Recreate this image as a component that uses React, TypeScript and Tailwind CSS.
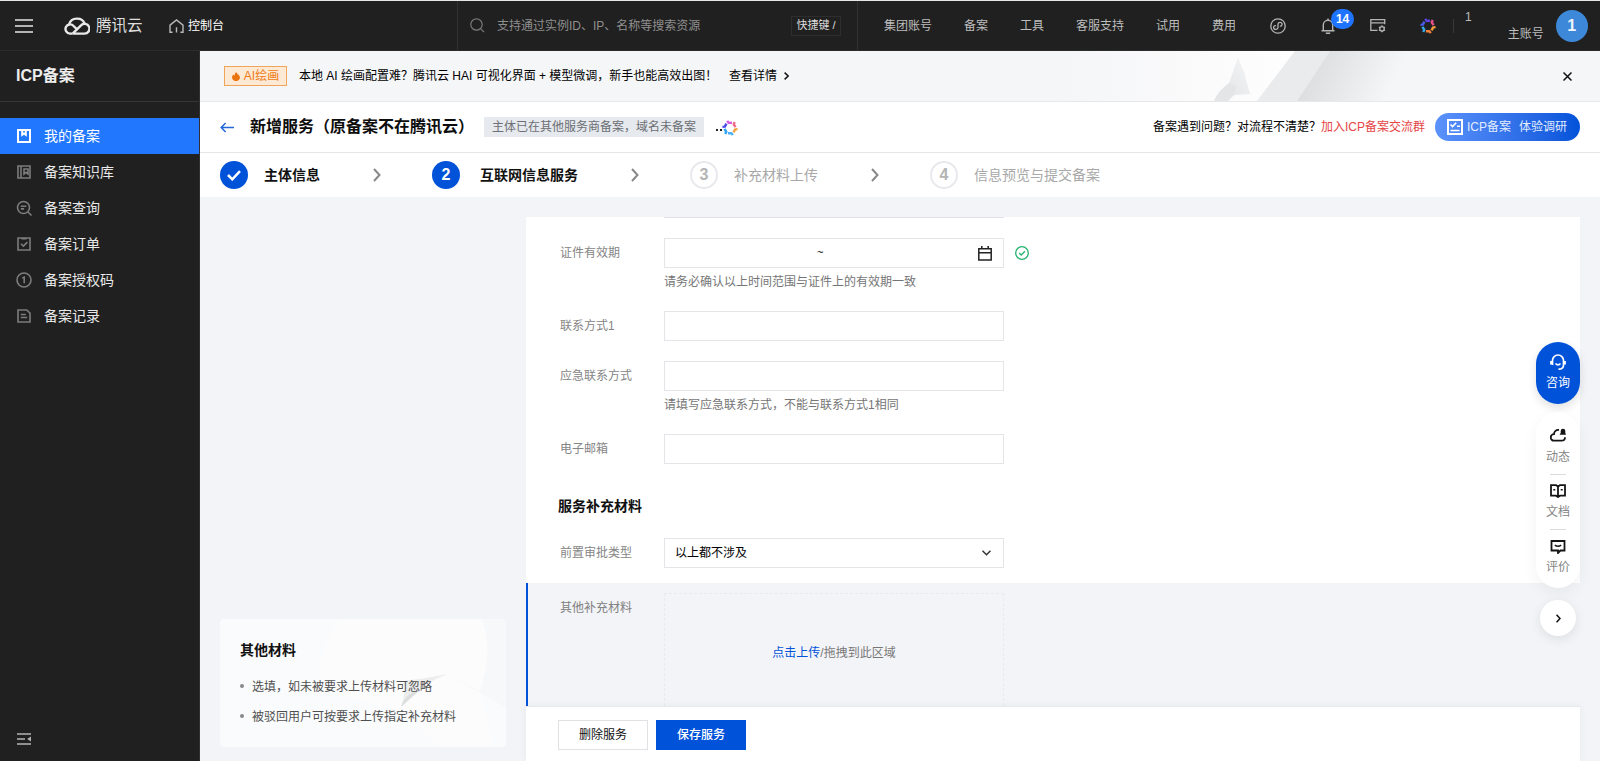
import React from "react";

const FONT = "font-['Liberation_Sans','Noto_Sans_CJK_SC',sans-serif]";

const PETALS = [0, 60, 120, 180, 240, 300];

function Flower({ className, colors }: { className: string; colors: string[] }) {
  return (
    <svg viewBox="0 0 16 16" className={className} fill="none" strokeWidth="2.4" strokeLinejoin="round">
      {PETALS.map((angle, i) => (
        <path key={angle} d="M5.2 0.900 L6.600 2.900 L10 2.700" stroke={colors[i]} transform={`rotate(${angle} 8 8)`} />
      ))}
    </svg>
  );
}

function Header() {
  return (
    <header className="flex h-[51px] w-full shrink-0 items-center border-t border-b border-t-[#e4e8e6] border-b-[#2c2c2c] bg-[#202020] text-xs text-[#bdbdbd]">
      <svg className="ml-[15px] h-[14px] w-[18px]" viewBox="0 0 18 14" stroke="#b4b4b4" strokeWidth="2">
        <path d="M0 1h18M0 7h18M0 13h18" />
      </svg>
      <svg className="ml-[31px] h-[19px] w-[26px]" viewBox="0 0 26 19" fill="none" stroke="#e8e8e8" strokeWidth="2.4">
        <path d="M5.2 8.2A8 7.2 0 0 1 20.6 7.6" />
        <path d="M8.6 17.6H6a4.6 4.6 0 1 1 3.6-7.6l4 3.8" />
        <path d="M8.6 17.6H20.4a4.9 4.9 0 1 0-3.4-8.3L8.6 17.6" />
      </svg>
      <span className="ml-[6px] w-[48px] text-[15.5px] leading-5 text-[#dedede]">腾讯云</span>
      <svg className="ml-[25px] h-[14px] w-[15px]" viewBox="0 0 15 14" fill="none" stroke="#b8b8b8" strokeWidth="1.4">
        <path d="M3.6 13.2H1V6.2L7.5 1 14 6.2v7H11.4M7.5 8.2V13.6" />
      </svg>
      <span className="ml-1 w-9 whitespace-nowrap text-white">控制台</span>
      <div className="ml-[233px] flex h-full w-[401px] items-center border-x border-[#303030]">
        <svg className="ml-[12px] h-[15px] w-[15px]" viewBox="0 0 15 15" fill="none" stroke="#777" strokeWidth="1.2">
          <circle cx="6.5" cy="6.5" r="5.7" />
          <path d="M10.8 10.8L14 14" />
        </svg>
        <span className="ml-3 text-[#8f8f8f]">支持通过实例ID、IP、名称等搜索资源</span>
        <span className="mr-[16px] ml-auto flex h-5 w-[50px] items-center justify-center border border-[#2e2e2e] text-[11px] whitespace-nowrap text-[#dcdcdc]">
          快捷键 /
        </span>
      </div>
      <nav className="ml-[26px] flex gap-8 whitespace-nowrap">
        <span>集团账号</span>
        <span>备案</span>
        <span>工具</span>
        <span>客服支持</span>
        <span>试用</span>
        <span>费用</span>
      </nav>
      <svg className="ml-[34px] h-4 w-4 shrink-0" viewBox="0 0 16 16" fill="none" stroke="#b4b4b4" strokeWidth="1.3">
        <circle cx="8" cy="8" r="7.2" />
        <path d="M6 7.7a1.9 1.9 0 1 0 .2 3.6c1-.3 1.8-.8 1.8-1.900V6.300c0-1.200.8-1.800 1.700-1.900a1.900 1.900 0 1 1 .2 3.700" />
      </svg>
      <div className="relative ml-[35px] h-4 w-[14px] shrink-0">
        <svg className="h-4 w-[14px]" viewBox="0 0 14 16" fill="none" stroke="#b4b4b4" strokeWidth="1.4">
          <path d="M.5 12.800H13.500M2.300 12.600V7a4.700 4.700 0 0 1 9.400 0v5.600M4.800 15.200h4.400M7 .5V2.300" />
        </svg>
        <span className="absolute -top-[9px] left-[10px] flex h-5 w-[23px] items-center justify-center rounded-full bg-[#1f74ff] text-xs font-bold text-white">
          14
        </span>
      </div>
      <svg className="ml-[35px] h-[15px] w-4 shrink-0" viewBox="0 0 16 15" fill="none" stroke="#b4b4b4" strokeWidth="1.300">
        <path d="M7.500 12.300H.8V1.700h13.900v4.500M.8 4.800h13.900" />
        <circle cx="12" cy="10.800" r="2.200" />
        <path d="M12 7.300v1.300M12 13v1.300M9 9.100l1.100.6M13.900 11.900l1.100.6M15 9.100l-1.100.6M10.100 11.900l-1.100.6" />
      </svg>
      <Flower className="ml-[34px] h-4 w-4 shrink-0" colors={["#5b45e6", "#e8508c", "#f59a3c", "#f5803c", "#35a8e8", "#4a5be8"]} />
      <i className="ml-[17px] h-[14px] w-px bg-[#383838]" />
      <span className="ml-[11px] -mt-[17px]">1</span>
      <span className="ml-[36px] mt-[16px] whitespace-nowrap">主账号</span>
      <span className="ml-3 flex h-8 w-8 shrink-0 items-center justify-center rounded-full bg-[#3d88d8] text-base font-bold text-[#eef5fc]">1</span>
    </header>
  );
}

const MENU = [
  {
    label: "我的备案",
    icon: <path d="M1 1h12v12H1zM5.200 1v4.800L7 4.500l1.800 1.300V1" />,
  },
  {
    label: "备案知识库",
    icon: <path d="M1 1h12v12H1zM4 1v12M7 9V4h4v5L9 7.300z" />,
  },
  {
    label: "备案查询",
    icon: (
      <>
        <circle cx="6.500" cy="6.500" r="6" />
        <path d="M10.800 10.800L14.500 14.500M3.800 5.300h5.500M3.800 7.900h3.300" />
      </>
    ),
  },
  {
    label: "备案订单",
    icon: <path d="M1 1h12v12H1zM4.500 1.800h5M4 6.700l2.400 2.400 4-4" />,
  },
  {
    label: "备案授权码",
    icon: (
      <>
        <circle cx="7" cy="7" r="7" />
        <path d="M5.300 5L7.200 4.200v6" />
      </>
    ),
  },
  {
    label: "备案记录",
    icon: <path d="M1 1h8.800L13 4.200V13H1zM3.800 5.500h5M3.800 8.500h6.400" />,
  },
];

function Sidebar() {
  return (
    <aside className="flex w-[200px] shrink-0 flex-col border-r border-[#303030] bg-[#202020]">
      <h1 className="flex h-[51px] items-center border-b border-[#363636] pb-px pl-4 text-base font-bold text-[#ededed]">ICP备案</h1>
      <ul className="mt-4">
        {MENU.map((item, i) => (
          <li
            key={item.label}
            className={
              i === 0
                ? "flex h-9 items-center bg-[#2277ff] pl-[17px] text-sm text-white"
                : "flex h-9 items-center pl-[17px] text-sm text-[#e9e9e9]"
            }
          >
            <svg
              viewBox="0 0 14 14"
              className={i === 0 ? "h-[14px] w-[14px] overflow-visible text-white" : "h-[14px] w-[14px] overflow-visible text-[#7c7c7c]"}
              fill="none"
              stroke="currentColor"
              strokeWidth={i === 0 ? 2 : 1.6}
            >
              {item.icon}
            </svg>
            <span className="ml-[13px]">{item.label}</span>
          </li>
        ))}
      </ul>
      <svg className="mt-auto mb-[16px] ml-[17px] h-[12px] w-[14px]" viewBox="0 0 14 12" fill="none" stroke="#b4b4b4" strokeWidth="1.500">
        <path d="M0 1h14M0 6h8M0 11h14" />
        <path d="M14 3.500v5L10.200 6z" fill="#b4b4b4" stroke="none" />
      </svg>
    </aside>
  );
}

function Banner() {
  return (
    <div className="relative h-[51px] shrink-0 border-b border-[#e6e8eb] bg-[#f5f6f8]">
      <svg className="absolute top-0 left-[860px] h-[50px] w-[440px]" viewBox="0 0 440 50" preserveAspectRatio="none">
        <defs>
          <linearGradient id="bandA" x1="0" x2="1">
            <stop offset="0" stopColor="#f5f6f8" />
            <stop offset=".55" stopColor="#fafafb" />
            <stop offset="1" stopColor="#fefefe" />
          </linearGradient>
          <linearGradient id="bandB" gradientUnits="userSpaceOnUse" x1="250" y1="15" x2="325" y2="50">
            <stop offset="0" stopColor="#dcdddf" />
            <stop offset="1" stopColor="#f5f6f8" />
          </linearGradient>
          <linearGradient id="shard" x1="0" x2="1" y1="1" y2="0">
            <stop offset="0" stopColor="#e6e7e9" />
            <stop offset="1" stopColor="#f3f4f5" />
          </linearGradient>
        </defs>
        <path d="M0 0H235L197 50H0z" fill="url(#bandA)" />
        <path d="M178 7l6 14 6 22-16 1-5-12z" fill="url(#shard)" />
        <path d="M169 32l7 3-2 9-6 6h-14q4-10 15-18z" fill="#e4e5e7" />
        <path d="M235 0h35L237 50h-40z" fill="#eaebed" />
        <path d="M270 0H400L360 50H237z" fill="url(#bandB)" />
      </svg>
      <div className="relative flex h-full items-center pl-6 text-xs text-black">
        <span className="flex h-5 w-[63px] items-center justify-center border border-[#f0a45c] bg-[#fee9d4] whitespace-nowrap text-[#ee7b16]">
          <svg className="mr-1 h-[9px] w-2" viewBox="0 0 8 9" fill="#ea7410">
            <path d="M4.300 0C4.600 1.800 8 3 8 5.600A3.800 3.400 0 0 1 4 9 3.800 3.400 0 0 1 0 5.600C0 4.300.8 3.200 1.500 2.600c.2.600.6.900 1 1C2.600 2.200 3.200.900 4.300 0z" />
          </svg>
          AI绘画
        </span>
        <span className="ml-3 w-[430px] whitespace-nowrap">
          本地 AI 绘画配置难？腾讯云 HAI 可视化界面 + 模型微调，新手也能高效出图！
        </span>
        <span className="whitespace-nowrap">查看详情</span>
        <svg className="ml-[7px] h-2 w-[5px]" viewBox="0 0 5 8" fill="none" stroke="#111" strokeWidth="1.500">
          <path d="M.6.600L4.200 4 .6 7.400" />
        </svg>
        <svg className="mr-[28px] ml-auto h-[9px] w-[9px]" viewBox="0 0 9 9" stroke="#111" strokeWidth="1.500">
          <path d="M.5.5l8 8M8.500.5l-8 8" />
        </svg>
      </div>
    </div>
  );
}

function TitleRow() {
  return (
    <div className="flex h-[51px] shrink-0 items-center border-b border-[#e4e6ea] bg-white pl-5 text-xs">
      <svg className="h-[11px] w-[14px]" viewBox="0 0 14 11" fill="none" stroke="#2468d8" strokeWidth="1.500">
        <path d="M14 5.500H1.200M5.600 1L1.200 5.500l4.400 4.500" />
      </svg>
      <h2 className="ml-4 w-[234px] text-base font-bold whitespace-nowrap text-[#0d0d0d]">新增服务（原备案不在腾讯云）</h2>
      <span className="flex h-5 w-[220px] items-center justify-center bg-[#e6e9ed] whitespace-nowrap text-[#6c6f75]">
        主体已在其他服务商备案，域名未备案
      </span>
      <svg className="mt-[7px] ml-[12px] h-[3px] w-[6px]" viewBox="0 0 6 3" fill="#222">
        <path d="M0 0h2v2H0zM4 0h2v2H4z" />
      </svg>
      <Flower className="mt-[2px] h-4 w-4 shrink-0" colors={["#d65be0", "#f06a8a", "#f5a33c", "#4ab0f5", "#2fa4f5", "#4a4be8"]} />
      <span className="ml-auto whitespace-nowrap text-black">备案遇到问题？对流程不清楚？</span>
      <span className="whitespace-nowrap text-[#e54545]">加入ICP备案交流群</span>
      <button className="mr-5 ml-[10px] flex h-7 w-[145px] shrink-0 items-center rounded-full bg-linear-to-r from-[#5b92fb] to-[#0052d9] pl-3 whitespace-nowrap text-[#e3edff]">
        <svg className="h-4 w-4" viewBox="0 0 16 16" fill="none" stroke="#fff" strokeWidth="2">
          <path d="M1 1h14v14H1z" />
          <path d="M3.500 5.500l2 2L9.200 3.800M10 7.300h3M3.500 11.500h9" strokeWidth="1.600" />
        </svg>
        <span className="ml-[4px]">ICP备案</span>
        <span className="ml-[8px]">体验调研</span>
      </button>
    </div>
  );
}

function StepChevron() {
  return (
    <svg className="mr-[51px] ml-[53px] h-[14px] w-2" viewBox="0 0 8 14" fill="none" stroke="#888" strokeWidth="2">
      <path d="M1 1l5.500 6L1 13" />
    </svg>
  );
}

function Steps() {
  return (
    <div className="flex h-11 shrink-0 items-center bg-white pl-5 text-sm whitespace-nowrap">
      <span className="flex h-7 w-7 items-center justify-center rounded-full bg-[#0052d9]">
        <svg className="h-[11px] w-[14px]" viewBox="0 0 14 11" fill="none" stroke="#fff" strokeWidth="2.500">
          <path d="M1 5l4.300 4.300L13 1.200" />
        </svg>
      </span>
      <span className="ml-4 font-bold text-[#111]">主体信息</span>
      <StepChevron />
      <span className="flex h-7 w-7 items-center justify-center rounded-full bg-[#0052d9] text-base font-bold text-white">2</span>
      <span className="ml-5 font-bold text-[#111]">互联网信息服务</span>
      <StepChevron />
      <span className="flex h-7 w-7 items-center justify-center rounded-full border-2 border-[#e7e9ed] text-base font-bold text-[#b4b4b4]">3</span>
      <span className="ml-4 text-[#a8a8a8]">补充材料上传</span>
      <StepChevron />
      <span className="flex h-7 w-7 items-center justify-center rounded-full border-2 border-[#e7e9ed] text-base font-bold text-[#b4b4b4]">4</span>
      <span className="ml-4 text-[#a8a8a8]">信息预览与提交备案</span>
    </div>
  );
}

function TipsCard() {
  return (
    <section className="relative mt-auto mb-[14px] ml-5 h-[128px] w-[286px] overflow-hidden rounded-sm bg-[#fafbfc]">
      <svg className="absolute inset-0 h-full w-full" viewBox="0 0 286 128">
        <path d="M110 0H262q10 34-2 72l14 56H220L180 92 100 70Q95 35 120 0z" fill="#fcfcfd" />
        <path d="M262 0q12 34-2 72l-34-17 40 22 20 12V0z" fill="#f7f8fa" />
        <path d="M181 88q6-18 2-26 22-2 44-7-14 6-24 12-12 8-22 21z" fill="#eceded" />
        <path d="M181 88q2-8 9-13l14-7q-10 8-23 20z" fill="#dcddde" />
      </svg>
      <div className="relative pt-[20px] pl-5">
        <h3 className="text-sm leading-[22px] font-bold text-[#111]">其他材料</h3>
        <ul className="mt-[17px] flex flex-col gap-3 text-xs leading-[18px] text-[#4f4f4f]">
          <li className="flex items-center gap-2">
            <i className="-mt-0.5 h-1 w-1 rounded-full bg-[#888]" />
            选填，如未被要求上传材料可忽略
          </li>
          <li className="flex items-center gap-2">
            <i className="-mt-0.5 h-1 w-1 rounded-full bg-[#888]" />
            被驳回用户可按要求上传指定补充材料
          </li>
        </ul>
      </div>
    </section>
  );
}

function Field({ label, help, children }: { label: string; help?: string; children?: React.ReactNode }) {
  return (
    <div className="flex pl-[34px]">
      <span className="w-[104px] pt-px leading-7 text-[#858585]">{label}</span>
      <div>
        <div className="flex items-center">
          <div className="flex h-[30px] w-[340px] items-center border border-[#e3e5e8] bg-white">
            {children}
          </div>
          {label === "证件有效期" && (
            <svg className="ml-[11px] h-[14px] w-[14px]" viewBox="0 0 14 14" fill="none" stroke="#23b26d" strokeWidth="1.300">
              <circle cx="7" cy="7" r="6.300" />
              <path d="M4.200 7l2 2 3.700-3.700" />
            </svg>
          )}
        </div>
        {help && <p className="mt-[5px] h-[18px] leading-[19px] text-[#757575]">{help}</p>}
      </div>
    </div>
  );
}

function FormPanel() {
  return (
    <main className="mt-5 mr-5 flex w-[1054px] shrink-0 flex-col bg-white text-xs">
      <div className="ml-[138px] h-px w-[340px] shrink-0 bg-[#e0e2e5]" />
      <div className="mt-5">
        <Field label="证件有效期" help="请务必确认以上时间范围与证件上的有效期一致">
          <span className="mt-[-2px] ml-[152px] text-[11px] text-black">~</span>
          <svg className="mr-[11px] ml-auto h-[15px] w-[14px]" viewBox="0 0 14 15" fill="none" stroke="#222" strokeWidth="1.500">
            <path d="M.8 2.700h12.400v11.300H.8zM.8 6.700h12.400M3.800 0v3M10.200 0v3" />
          </svg>
        </Field>
      </div>
      <div className="mt-5">
        <Field label="联系方式1" />
      </div>
      <div className="mt-5">
        <Field label="应急联系方式" help="请填写应急联系方式，不能与联系方式1相同" />
      </div>
      <div className="mt-5">
        <Field label="电子邮箱" />
      </div>
      <h3 className="mt-[31px] mb-[21px] pl-8 text-sm leading-[22px] font-bold text-[#111]">服务补充材料</h3>
      <Field label="前置审批类型">
        <span className="ml-[10px] text-black">以上都不涉及</span>
        <svg className="mr-3 ml-auto h-[6px] w-[9px]" viewBox="0 0 9 6" fill="none" stroke="#333" strokeWidth="1.500">
          <path d="M.5.700l4 4 4-4" />
        </svg>
      </Field>
      <div className="mt-[15px] flex h-[123px] shrink-0 border-l-2 border-[#0052d9] bg-[#f3f4f7] pt-[10px] pl-8">
        <span className="w-[104px] pt-px leading-[29px] text-[#808080]">其他补充材料</span>
        <div className="flex w-[340px] items-center justify-center border border-b-0 border-dashed border-[#e8eaed] pt-[6px] whitespace-nowrap">
          <span className="text-[#0052d9]">点击上传</span>
          <span className="text-[#777]">/拖拽到此区域</span>
        </div>
      </div>
      <footer className="flex grow items-start gap-2 border-t border-[#e7e9ec] bg-white pt-[13px] pl-8 shadow-[0_0_8px_rgba(0,0,0,0.05)]">
        <button className="h-[30px] w-[90px] border border-[#dfe1e4] bg-white text-[#111]">删除服务</button>
        <button className="h-[30px] w-[90px] bg-[#0052d9] font-medium text-white">保存服务</button>
      </footer>
    </main>
  );
}

function FloatTools() {
  return (
    <div className="absolute top-[342px] right-5 flex w-11 flex-col items-center text-xs">
      <div className="flex h-[62px] w-11 flex-col items-center rounded-full bg-[#0052d9] pt-3 text-white shadow-[0_4px_10px_rgba(0,0,0,0.12)]">
        <svg className="h-4 w-4" viewBox="0 0 16 16" fill="none" stroke="#fff" strokeWidth="1.700">
          <path d="M2.500 11V6.500a5.500 5.500 0 0 1 11 0V11c0 3-2 4.200-5 4.200" />
          <path d="M1.200 7v3.500M14.800 7v3.500" strokeWidth="2.200" />
          <path d="M5.500 9.500q2.500 2.600 5 0" />
        </svg>
        <span className="mt-[4px] leading-[18px]">咨询</span>
      </div>
      <div className="mt-2 flex h-[176px] w-11 flex-col items-center rounded-full bg-white pt-[16px] leading-[18px] text-[#858585] shadow-[0_6px_16px_rgba(0,0,0,0.05)]">
        <svg className="h-[14px] w-4" viewBox="0 0 16 14" fill="none" stroke="#151515" strokeWidth="1.800">
          <path d="M9 2A4.200 4.200 0 0 0 4 6.200 3.200 3.200 0 0 0 4 12.700h7.500c2.200 0 3.500-1.300 3.500-3.500" />
          <path d="M9.600 6.800h6.400L15.300 5V3a2.300 2.300 0 0 0-4.600 0v2z" fill="#151515" stroke="none" />
        </svg>
        <span className="mt-[6px]">动态</span>
        <i className="mt-[8px] h-px w-4 shrink-0 bg-[#dcdcdc]" />
        <svg className="mt-[9px] h-[14px] w-4 shrink-0" viewBox="0 0 16 14" fill="none" stroke="#151515" strokeWidth="1.800">
          <path d="M1 1.200h5L8 2.500l2-1.300h5v10.500h-5L8 13l-2-1.300H1zM8 2.500V13" />
          <path d="M3.300 5.800h2M10.700 5.800h2" strokeWidth="1.500" />
        </svg>
        <span className="mt-[5px]">文档</span>
        <i className="mt-[8px] h-px w-4 shrink-0 bg-[#dcdcdc]" />
        <svg className="mt-[10px] h-[14px] w-4 shrink-0" viewBox="0 0 16 14" fill="none" stroke="#151515" strokeWidth="1.800">
          <path d="M1.500 1h13v9.500h-4L8 13V10.500H1.500z" />
          <path d="M4.800 5.200q3.200 2.200 6.400 0" strokeWidth="1.600" />
        </svg>
        <span className="mt-[4px]">评价</span>
      </div>
      <div className="mt-3 flex h-9 w-9 items-center justify-center rounded-full bg-white shadow-[0_3px_12px_rgba(0,0,0,0.09)]">
        <svg className="h-[9px] w-[5px]" viewBox="0 0 5 9" fill="none" stroke="#111" strokeWidth="1.600">
          <path d="M.5.700L4 4.500.5 8.300" />
        </svg>
      </div>
    </div>
  );
}

export default function App() {
  return (
    <div className={`relative flex h-[761px] w-[1600px] flex-col overflow-hidden bg-[#f3f4f7] ${FONT}`}>
      <Header />
      <div className="flex min-h-0 grow">
        <Sidebar />
        <div className="flex min-w-0 grow flex-col">
          <Banner />
          <TitleRow />
          <Steps />
          <div className="flex min-h-0 grow">
            <div className="flex w-[326px] shrink-0 flex-col">
              <TipsCard />
            </div>
            <FormPanel />
          </div>
        </div>
      </div>
      <FloatTools />
    </div>
  );
}
